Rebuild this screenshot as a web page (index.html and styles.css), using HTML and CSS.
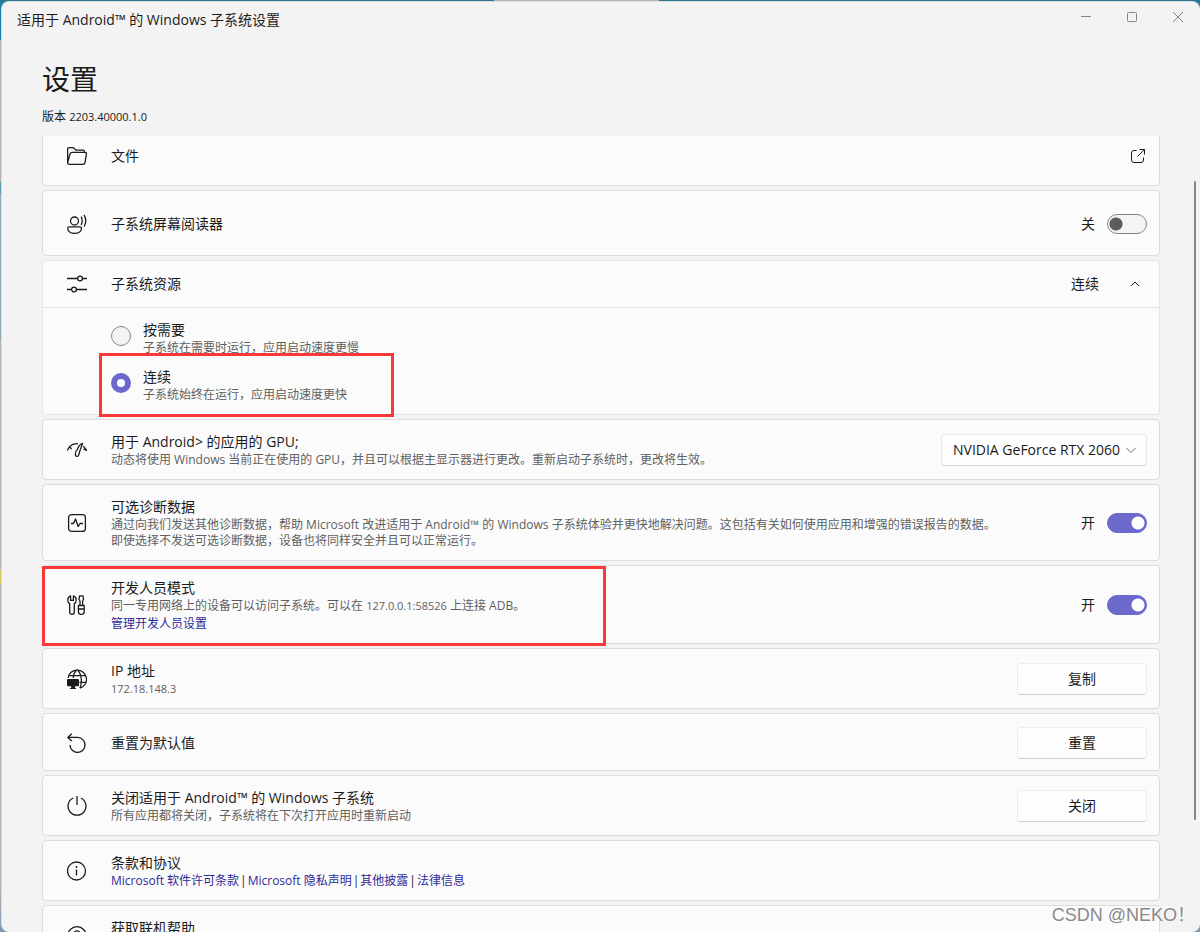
FILE: index.html
```html
<!DOCTYPE html>
<html lang="zh-CN">
<head>
<meta charset="utf-8">
<title>适用于 Android™ 的 Windows 子系统设置</title>
<link rel="stylesheet" href="styles.css">
</head>
<body>
<div class="window">
  <header class="titlebar">
    <span class="titlebar-text">适用于 Android™ 的 Windows 子系统设置</span>
    <div class="caption-buttons">
      <button type="button" class="caption-button" aria-label="最小化"><svg width="10" height="10" viewBox="0 0 10 10"><path d="M0 4.500h10"/></svg></button>
      <button type="button" class="caption-button" aria-label="最大化"><svg width="10" height="10" viewBox="0 0 10 10"><rect x=".5" y=".5" width="9" height="9" rx="1"/></svg></button>
      <button type="button" class="caption-button" aria-label="关闭窗口"><svg width="10" height="10" viewBox="0 0 10 10"><path d="M0 0l10 10M10 0L0 10"/></svg></button>
    </div>
  </header>

  <div class="page-head">
    <h1>设置</h1>
    <p class="version">版本 <span class="digits">2203.40000.1.0</span></p>
  </div>

  <main class="scroller">
    <div class="list">
      <section class="card card-files">
        <svg class="icon" viewBox="0 0 20 20"><path d="M.6 16.800V3.200Q.6 1.600 2.200 1.600H5.800Q6.600 1.600 7.200 2.300L8.800 4.200H15.800Q17.600 4.200 17.600 6V6.200M.6 16.800L3 8Q3.500 6.300 5.300 6.300H18Q19.700 6.300 19.400 8L18 16.600Q17.700 18.300 16 18.300H2.200Q.7 18.300 .6 16.800Z"/></svg>
        <div class="text"><h2>文件</h2></div>
        <button type="button" class="link-out" aria-label="打开文件"><svg width="16" height="16" viewBox="0 0 16 16"><path d="M6.500 2.500H4Q1.500 2.500 1.500 5V12Q1.500 14.500 4 14.500H11Q13.500 14.500 13.500 12V9.500M9.500 1.500H14.500V6.500M14.500 1.500L7.500 8.500"/></svg></button>
      </section>

      <section class="card card-reader">
        <svg class="icon" viewBox="0 0 20 20"><circle cx="7.500" cy="7" r="4"/><path d="M2.200 12.800H13Q14.500 12.800 14.500 14.300C14.500 17.500 11.500 19.400 7.600 19.400S.7 17.500 .7 14.300Q.7 12.800 2.200 12.800ZM14.200 2.600Q16.200 6.800 14.200 11M17 .8Q20.500 6.800 17 12.600"/></svg>
        <div class="text"><h2 id="reader">子系统屏幕阅读器</h2></div>
        <label class="switch"><span>关</span><input type="checkbox" role="switch" aria-labelledby="reader"></label>
      </section>

      <section class="card expander">
        <div class="expander-head">
          <svg class="icon" viewBox="0 0 20 20"><path d="M0 4.500H10.500M15.500 4.500H20M0 15.500H4.500M9.500 15.500H20"/><circle cx="13" cy="4.500" r="2.400"/><circle cx="7" cy="15.500" r="2.400"/></svg>
          <div class="text"><h2>子系统资源</h2></div>
          <span class="expander-value">连续</span>
          <button type="button" class="expander-toggle" aria-label="收起" aria-expanded="true"><svg width="10" height="10" viewBox="0 0 10 10"><path d="M1 7l4-4 4 4"/></svg></button>
        </div>
        <div class="options">
          <label class="option">
            <input type="radio" name="mode">
            <span class="text"><span class="title">按需要</span><span class="sub">子系统在需要时运行，应用启动速度更慢</span></span>
          </label>
          <label class="option">
            <input type="radio" name="mode" checked>
            <span class="text"><span class="title">连续</span><span class="sub">子系统始终在运行，应用启动速度更快</span></span>
            <span class="mark mark-option"></span>
          </label>
        </div>
      </section>

      <section class="card">
        <svg class="icon" viewBox="0 0 20 20"><path d="M.4 10.400L2.600 6.600 4.600 9.200M2.600 6.600Q6 3.200 11 3.800M16.400 6.200L19.600 10.400L16.400 9M15.600 3.400Q12 4.600 10.200 9.800C9 10.600 8.300 12.600 8.300 14.600C8.300 16.900 10.900 17 11.600 15.200L13 10.500Z"/></svg>
        <div class="text"><h2 id="gpu">用于 Android&gt; 的应用的 GPU;</h2><p class="sub">动态将使用 Windows 当前正在使用的 GPU，并且可以根据主显示器进行更改。重新启动子系统时，更改将生效。</p></div>
        <div class="select-box">
          <select aria-labelledby="gpu"><option>NVIDIA GeForce RTX 2060</option></select>
          <svg class="select-arrow" width="10" height="10" viewBox="0 0 10 10"><path d="M.5 3L5 7.500 9.500 3"/></svg>
        </div>
      </section>

      <section class="card">
        <svg class="icon" viewBox="0 0 20 20"><rect x="1.600" y="1.600" width="16.800" height="16.800" rx="3"/><path d="M4 10.500H6.500L8.500 6 11.200 13.500 13 10.500H16"/></svg>
        <div class="text"><h2 id="diag">可选诊断数据</h2><p class="sub">通过向我们发送其他诊断数据，帮助 Microsoft 改进适用于 Android™ 的 Windows 子系统体验并更快地解决问题。这包括有关如何使用应用和增强的错误报告的数据。<br>即使选择不发送可选诊断数据，设备也将同样安全并且可以正常运行。</p></div>
        <label class="switch"><span>开</span><input type="checkbox" role="switch" checked aria-labelledby="diag"></label>
      </section>

      <section class="card">
        <svg class="icon" viewBox="0 0 20 20"><path d="M3.600 .9V5.400H6.400V.9C8.300 1.500 9.200 3 9.200 4.900C9.200 6.700 8.300 8 7.300 8.600V17Q7.300 19.300 5 19.300T2.700 17V8.600C1.700 8 .8 6.700 .8 4.900C.8 3 1.700 1.500 3.600 .9ZM13 10.500V6L12 4.500 12.600 .8H16L16.600 4.500 15.600 6V10.500M11.400 10.500H17.200V17Q17.200 19.300 14.300 19.300T11.400 17ZM11.400 14H17.200"/></svg>
        <div class="text"><h2 id="dev">开发人员模式</h2><p class="sub">同一专用网络上的设备可以访问子系统。可以在 <span class="digits">127.0.0.1:58526</span> 上连接 ADB。</p><p class="sub"><a href="#dev">管理开发人员设置</a></p></div>
        <label class="switch"><span>开</span><input type="checkbox" role="switch" checked aria-labelledby="dev"></label>
        <span class="mark mark-dev"></span>
      </section>

      <section class="card">
        <svg class="icon" viewBox="0 0 20 20"><path d="M1 9A9.300 9.300 0 1 1 13 19.200M10.200 .7C7.700 2.500 6.400 5.500 6.200 9M10.200 .7C14.800 4.500 15.400 14 12.800 19M1.800 6.700H18.800M12.500 13.300H18.800"/><path class="solid" d="M1.200 10H10.800Q12 10 12 11.200V16Q12 17.200 10.800 17.200H8V19H9V20H3V19H4.200V17.200H1.200Q0 17.200 0 16V11.200Q0 10 1.200 10Z"/></svg>
        <div class="text"><h2>IP 地址</h2><p class="sub"><span class="digits">172.18.148.3</span></p></div>
        <button type="button" class="button">复制</button>
      </section>

      <section class="card">
        <svg class="icon" viewBox="0 0 20 20"><path d="M4.800 .8L.8 4.400 4.800 8M.8 4.400H10.600A7.500 7.500 0 1 1 3 12"/></svg>
        <div class="text"><h2>重置为默认值</h2></div>
        <button type="button" class="button">重置</button>
      </section>

      <section class="card">
        <svg class="icon" viewBox="0 0 20 20"><path d="M10 0V9M6.200 2A9 9 0 1 0 13.800 2"/></svg>
        <div class="text"><h2>关闭适用于 Android™ 的 Windows 子系统</h2><p class="sub">所有应用都将关闭，子系统将在下次打开应用时重新启动</p></div>
        <button type="button" class="button">关闭</button>
      </section>

      <section class="card">
        <svg class="icon" viewBox="0 0 20 20"><circle cx="9.500" cy="10" r="9"/><path d="M9.500 8.500V14.500"/><circle class="solid" cx="9.500" cy="6" r="1"/></svg>
        <div class="text"><h2 id="terms">条款和协议</h2><p class="sub links"><a href="#terms">Microsoft 软件许可条款</a><span>|</span><a href="#terms">Microsoft 隐私声明</a><span>|</span><a href="#terms">其他披露</a><span>|</span><a href="#terms">法律信息</a></p></div>
      </section>

      <section class="card card-help">
        <svg class="icon" viewBox="0 0 20 20"><circle cx="10" cy="10" r="9.300"/><path d="M7.200 7.500C7.200 3.900 12.800 3.900 12.800 7.500C12.800 9.700 10 9.700 10 12.500"/><circle class="solid" cx="10" cy="15" r="1"/></svg>
        <div class="text"><h2>获取联机帮助</h2></div>
      </section>
    </div>
  </main>
  <div class="scrollbar"></div>
</div>
<div class="watermark">CSDN @NEKO！</div>
</body>
</html>
```
FILE: styles.css
```css
* {
  box-sizing: border-box;
}

body {
  position: relative;
  display: flex;
  height: 100vh;
  margin: 0;
  padding: 1px 0 0 1px;
  overflow: hidden;
  background:
    linear-gradient(#b9b9b9, #b9b9b9) 494px 0 / 165px 1px no-repeat,
    linear-gradient(#2b7391, #2b7391) 0 0 / 100% 1px no-repeat,
    linear-gradient(#1a7fa5 0 40px, #b4b4b4 40px 182px, #5b9ab0 182px 194px, #8fabb5 194px 340px, #b4b4b4 340px 437px, #b4b4b4 437px 570px, #d3ce52 570px 584px, #b4b4b4 584px 890px, #7a96b4 100%);
  color: #1b1b1b;
  font-family: "Open Sans", "Noto Sans CJK SC", sans-serif;
  font-size: 14px;
  line-height: 20px;
}

h1,
h2,
p {
  margin: 0;
  font-weight: 400;
}

button,
input,
select {
  margin: 0;
  color: inherit;
  font: inherit;
}

svg {
  display: block;
  fill: none;
  stroke: currentColor;
}

a {
  color: #2d2a98;
  text-decoration: none;
}

.window {
  position: relative;
  display: flex;
  flex: 1;
  flex-direction: column;
  min-width: 0;
  overflow: hidden;
  border: solid #dcdcdc;
  border-width: 1px 0 0 1px;
  border-radius: 8px;
  background: #f3f3f3;
}

.titlebar {
  display: flex;
  flex: none;
  justify-content: space-between;
  height: 36px;
  padding-left: 15px;
}

.titlebar-text {
  align-self: center;
}

.caption-buttons {
  display: flex;
  height: 30px;
  margin-right: -1px;
}

.caption-button {
  display: grid;
  place-items: center;
  width: 46px;
  padding: 0;
  border: 0;
  background: none;
  color: #868686;
}

.page-head {
  flex: none;
  padding: 21px 40px 11px;
}

h1 {
  font-size: 28px;
  line-height: 40px;
}

.version {
  margin-top: 10px;
  font-size: 12px;
  line-height: 16px;
}

.digits {
  font-size: 11px;
}

.scroller {
  flex: 1;
  min-height: 0;
  padding: 0 40px;
  overflow: hidden;
}

.list {
  display: flex;
  flex-direction: column;
  gap: 4px;
  margin-top: -12px;
}

.card {
  position: relative;
  display: flex;
  flex: none;
  align-items: center;
  padding: 12px 12px 11px 24px;
  border: 1px solid #dcdcdc;
  border-radius: 4px;
  background: #fbfbfb;
}

.card:has(.button) {
  min-height: 58px;
}

.card-files {
  min-height: 62px;
}

.card-reader {
  min-height: 66px;
}

.card-help {
  min-height: 61px;
}

.card-help .text {
  align-self: flex-start;
}

.icon {
  flex: none;
  width: 20px;
  height: 20px;
  margin-right: 24px;
  stroke-width: 1.3;
  stroke-linejoin: round;
}

.solid {
  fill: currentColor;
  stroke: none;
}

.text {
  flex: 1;
  min-width: 0;
}

h2 {
  font-size: 14px;
  line-height: 20px;
}

.title {
  display: block;
}

.sub {
  display: block;
  color: #5f5f5f;
  font-size: 12px;
  line-height: 16px;
}

.sub + .sub {
  margin-top: 2px;
}

.links {
  display: flex;
  gap: 1px;
  color: #1b1b1b;
}

.link-out {
  margin-right: 1px;
  padding: 0;
  border: 0;
  background: none;
}

.switch {
  display: flex;
  align-items: center;
  gap: 12px;
}

.switch input {
  width: 40px;
  height: 20px;
  border: 1px solid #868686;
  border-radius: 10px;
  background: radial-gradient(circle at 8px 9px, #5c5c5c 6px, transparent 7px) #f4f4f4;
  appearance: none;
}

.switch input:checked {
  border-color: #6b69cb;
  background: radial-gradient(circle at 30px 9px, #fff 6px, transparent 7px) #6b69cb;
}

.expander {
  display: block;
  padding: 0;
  border-color: #e5e5e5;
}

.expander-head {
  display: flex;
  align-items: center;
  height: 46px;
  padding: 0 12px 0 24px;
}

.expander-toggle {
  display: grid;
  place-items: center;
  width: 24px;
  height: 24px;
  margin-left: 24px;
  padding: 0;
  border: 0;
  background: none;
}

.options {
  display: flex;
  flex-direction: column;
  align-items: flex-start;
  gap: 11px;
  padding: 12px 12px 11px 68px;
  border-top: 1px solid #e5e5e5;
}

.option {
  position: relative;
  display: flex;
  gap: 12px;
}

.option input {
  flex: none;
  width: 20px;
  height: 20px;
  margin-top: 6px;
  border: 1px solid #868686;
  border-radius: 50%;
  background: #f4f4f4;
  appearance: none;
}

.option input:checked {
  border: 6px solid #6b69cb;
  background: #fff;
}

.mark {
  position: absolute;
  border: 3px solid #fb3838;
  pointer-events: none;
}

.mark-option {
  top: -14px;
  left: -12px;
  width: 295px;
  height: 64px;
}

.mark-dev {
  top: 0;
  left: -1px;
  width: 564px;
  height: 80px;
  z-index: 1;
}

.select-box {
  position: relative;
}

.select-box select {
  width: 206px;
  height: 32px;
  padding: 0 20px 0 11px;
  border: 1px solid #e8e8e8;
  border-bottom-color: #d0d0d0;
  border-radius: 4px;
  background: #fefefe;
  appearance: none;
}

.select-arrow {
  position: absolute;
  top: 11px;
  right: 11px;
  color: #6a6a6a;
  pointer-events: none;
}

.button {
  width: 130px;
  height: 32px;
  padding: 0;
  border: 1px solid #ececec;
  border-bottom-color: #d0d0d0;
  border-radius: 4px;
  background: #fefefe;
}

.scrollbar {
  position: absolute;
  top: 179px;
  right: 4px;
  bottom: 112px;
  width: 2px;
  border-radius: 1px;
  background: #868686;
}

.watermark {
  position: absolute;
  right: 5px;
  bottom: 4px;
  color: #8a8a8a;
  font-family: "Liberation Sans", "Noto Sans CJK SC", sans-serif;
  font-size: 18px;
  line-height: 26px;
  text-shadow: -1px -1px #fff;
}
```
